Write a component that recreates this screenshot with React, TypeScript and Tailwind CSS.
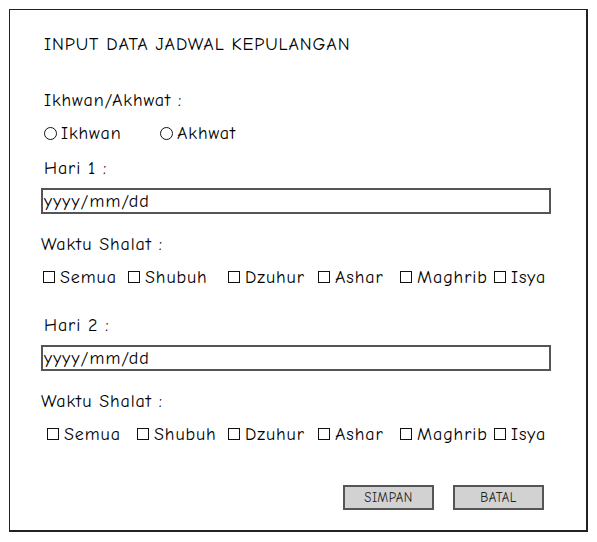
const font = { fontFamily: '"Comic Sans MS", "Comic Neue", "Open Sans", "DejaVu Sans", sans-serif' };

function Radio({ label, className }: { label: string; className?: string }) {
  return (
    <div className={`flex items-center ${className ?? ""}`}>
      <span className="mr-[4px] h-[13px] w-[13px] rounded-full border border-[#111]" />
      <span>{label}</span>
    </div>
  );
}

function Check({ label, className }: { label: string; className?: string }) {
  return (
    <div className={`flex items-center ${className ?? ""}`}>
      <span className="mr-[5px] h-[12px] w-[12px] border border-[#111]" />
      <span>{label}</span>
    </div>
  );
}

function DateInput() {
  return (
    <div className="flex h-[26px] w-[510px] items-center border-2 border-[#555] pl-[1px] tracking-[0.06em] text-black">
      yyyy/mm/dd
    </div>
  );
}

export default function App() {
  return (
    <div
      className="h-[542px] w-[597px] bg-white p-[9px] text-[18px] tracking-[0.05em] text-black"
      style={font}
    >
      <div className="flex h-[523px] flex-col border border-b-2 border-r-2 border-[#222] pl-[31px] pt-[24px]">
        <div className="flex h-5 items-center pl-[3px]">INPUT DATA JADWAL KEPULANGAN</div>

        <div className="mt-[36px] flex h-5 items-center pl-[3px]">Ikhwan/Akhwat :</div>
        <div className="mt-[13px] flex h-5 items-center pl-[3px]">
          <Radio label="Ikhwan" className="w-[116px]" />
          <Radio label="Akhwat" />
        </div>

        <div className="mt-[15px] flex h-5 items-center pl-[3px]">Hari 1 :</div>
        <div className="mt-[10px]">
          <DateInput />
        </div>
        <div className="mt-[20px] flex h-5 items-center">Waktu Shalat :</div>
        <div className="mt-[13px] flex h-5 items-center pl-[2px]">
          <Check label="Semua" className="w-[85px]" />
          <Check label="Shubuh" className="w-[100px]" />
          <Check label="Dzuhur" className="w-[90px]" />
          <Check label="Ashar" className="w-[82px]" />
          <Check label="Maghrib" className="w-[94px]" />
          <Check label="Isya" />
        </div>

        <div className="mt-[28px] flex h-5 items-center pl-[3px]">Hari 2 :</div>
        <div className="mt-[10px]">
          <DateInput />
        </div>
        <div className="mt-[20px] flex h-5 items-center">Waktu Shalat :</div>
        <div className="mt-[13px] flex h-5 items-center pl-[6px]">
          <Check label="Semua" className="w-[90px]" />
          <Check label="Shubuh" className="w-[91px]" />
          <Check label="Dzuhur" className="w-[90px]" />
          <Check label="Ashar" className="w-[82px]" />
          <Check label="Maghrib" className="w-[94px]" />
          <Check label="Isya" />
        </div>

        <div className="mt-[41px] flex gap-[19px] pl-[302px]">
          <button className="flex h-[25px] w-[91px] items-center justify-center border-2 border-[#555] bg-[#d2d2d2] text-[13px] tracking-[0.03em] text-[#222]">
            SIMPAN
          </button>
          <button className="flex h-[25px] w-[91px] items-center justify-center border-2 border-[#555] bg-[#d2d2d2] text-[13px] tracking-[0.03em] text-[#222]">
            BATAL
          </button>
        </div>
      </div>
    </div>
  );
}
